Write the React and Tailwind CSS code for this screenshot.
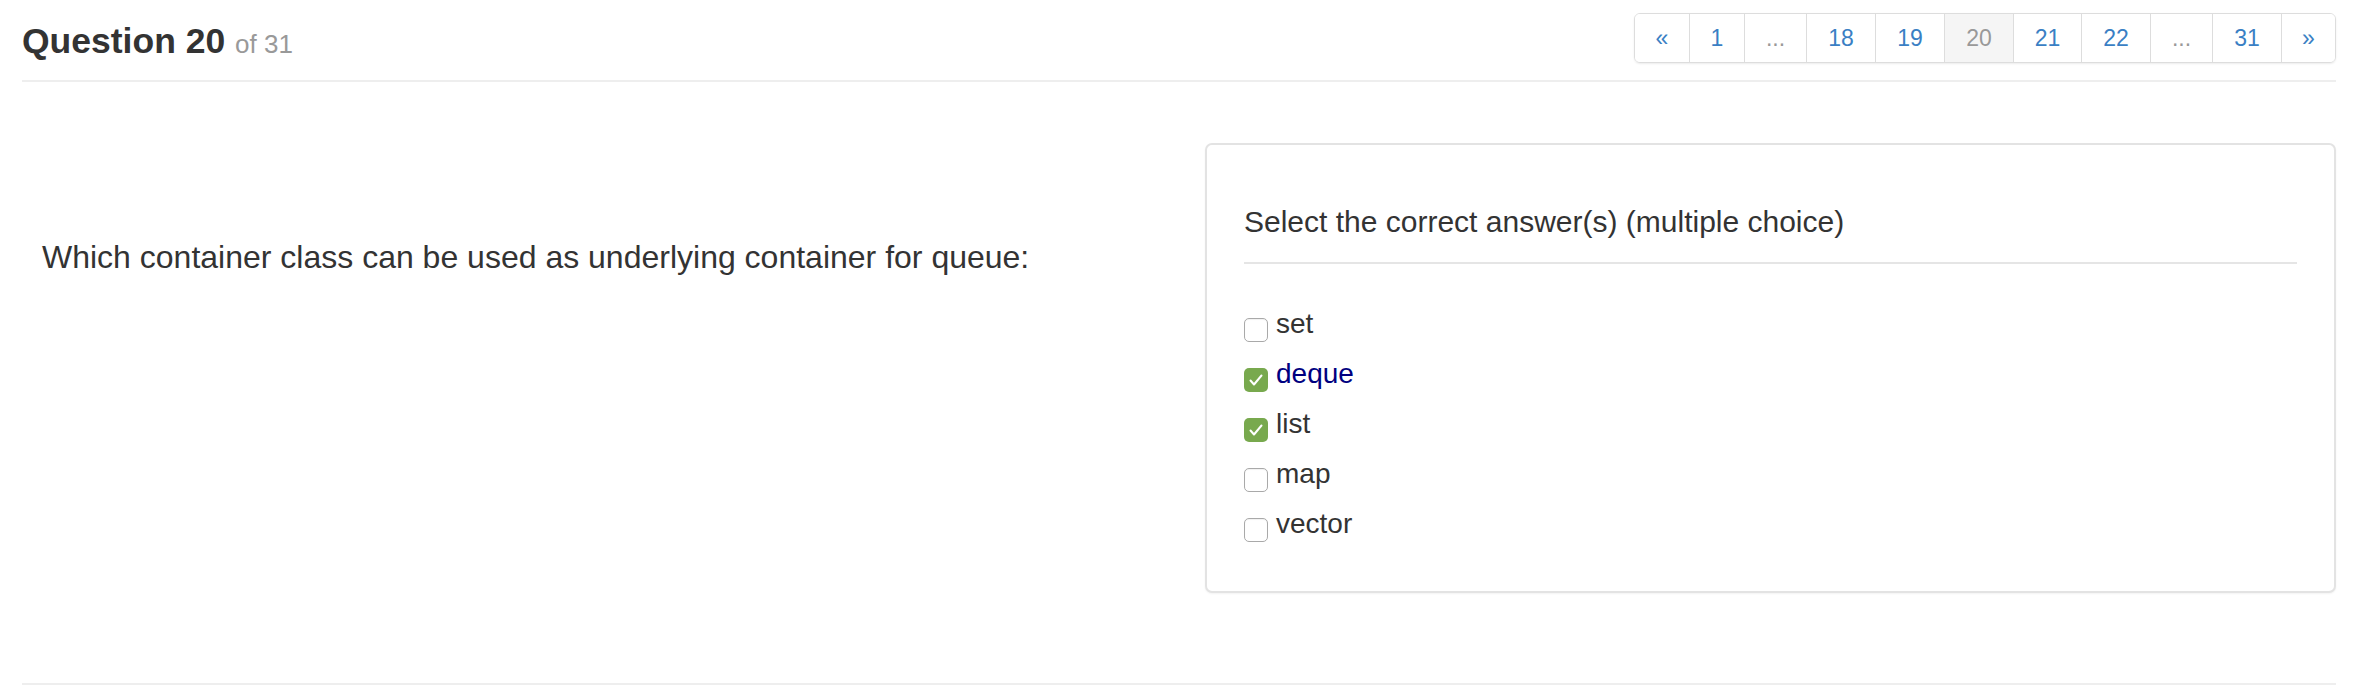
import React from 'react';

const pages = [
  { label: '«', w: 'w-[54px]', first: true },
  { label: '1', w: 'w-[55px]' },
  { label: '...', w: 'w-[62px]', muted: true },
  { label: '18', w: 'w-[69px]' },
  { label: '19', w: 'w-[69px]' },
  { label: '20', w: 'w-[69px]', active: true },
  { label: '21', w: 'w-[68px]' },
  { label: '22', w: 'w-[69px]' },
  { label: '...', w: 'w-[62px]', muted: true },
  { label: '31', w: 'w-[69px]' },
  { label: '»', w: 'w-[54px]' },
];

const options = [
  { label: 'set', checked: false },
  { label: 'deque', checked: true, highlight: true },
  { label: 'list', checked: true },
  { label: 'map', checked: false },
  { label: 'vector', checked: false },
];

const Checkbox = ({ checked }) =>
  checked ? (
    <span className="mt-[19px] flex h-[24px] w-[24px] shrink-0 items-center justify-center rounded-[5px] bg-[#78a94e]">
      <svg width="20" height="20" viewBox="0 0 20 20">
        <path d="M4.5 10.5 L8 14.5 L15.5 5.5" fill="none" stroke="#fff" strokeWidth="2" strokeLinecap="round" strokeLinejoin="round" />
      </svg>
    </span>
  ) : (
    <span className="mt-[19px] h-[24px] w-[24px] shrink-0 rounded-[5px] border border-[#a9a9a9] bg-white shadow-[inset_0_1px_1px_rgba(0,0,0,0.06)]" />
  );

export default function App() {
  return (
    <div className="min-h-[700px] bg-white pl-[22px] pr-[36px] text-[#333]" style={{ fontFamily: '"Liberation Sans", Arial, Helvetica, sans-serif' }}>
      {/* header */}
      <div className="mt-[13px] flex h-[50px] items-start justify-between">
        <h1 className="mt-[3px] text-[35.5px] font-bold leading-[50px]">
          Question 20 <span className="text-[26px] font-normal leading-none text-[#999]">of 31</span>
        </h1>
        <nav className="flex h-[50px] overflow-hidden rounded-[6px] border border-[#ddd] shadow-[0_1px_2px_rgba(0,0,0,0.08)]">
          {pages.map((p, i) => (
            <span
              key={i}
              className={`flex items-center justify-center text-[23px] ${p.w} ${p.first ? '' : 'border-l border-[#ddd]'} ${
                p.active ? 'bg-[#f5f5f5] text-[#999]' : p.muted ? 'bg-white text-[#999]' : 'bg-white text-[#3a7fc4]'
              }`}
            >
              {p.label}
            </span>
          ))}
        </nav>
      </div>
      <div className="mt-[17px] h-[2px] bg-[#eee]" />

      {/* body */}
      <div className="mt-[61px] flex items-start">
        <div className="flex-1 pl-[20px] pt-[91px]">
          <p className="text-[32px] leading-[46px]">Which container class can be used as underlying container for queue:</p>
        </div>
        <div className="w-[1131px] rounded-[7px] border-2 border-[#e3e3e3] bg-white px-[37px] pb-[42px] pt-[55px] shadow-[0_1px_2px_rgba(0,0,0,0.05)]">
          <div className="border-b-2 border-[#e5e5e5] pb-[19px] text-[30px] leading-[43px]">
            Select the correct answer(s) (multiple choice)
          </div>
          <div className="mt-[35px] flex flex-col">
            {options.map((o) => (
              <label key={o.label} className="flex h-[50px] items-start gap-[8px]">
                <Checkbox checked={o.checked} />
                <span className={`text-[28px] leading-[50px] ${o.highlight ? 'text-[#000080]' : 'text-[#333]'}`}>{o.label}</span>
              </label>
            ))}
          </div>
        </div>
      </div>

      <div className="mt-[90px] h-[2px] bg-[#eee]" />
    </div>
  );
}
